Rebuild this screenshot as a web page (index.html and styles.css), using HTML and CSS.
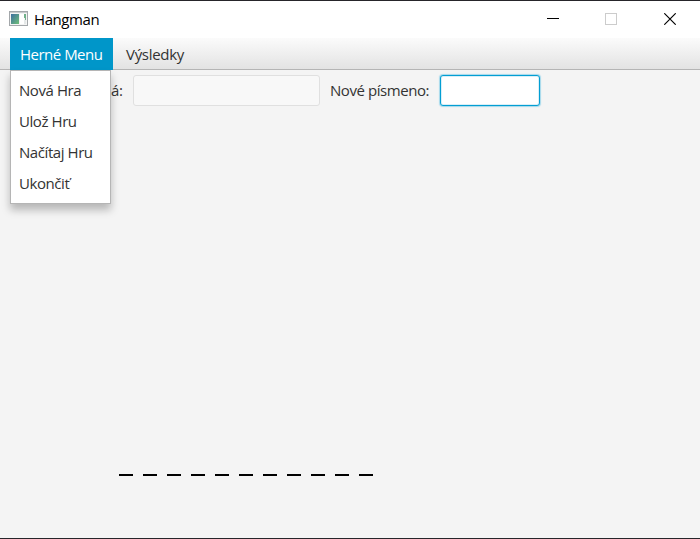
FILE: index.html
```html
<!DOCTYPE html>
<html lang="sk">
<head>
<meta charset="utf-8">
<title>Hangman</title>
<link rel="stylesheet" href="styles.css">
</head>
<body>
<div class="window">
  <header class="titlebar">
    <svg class="app-icon" width="19" height="16" viewBox="0 0 19 16">
      <defs>
        <linearGradient id="pane" x1="0" y1="0" x2="1" y2="1">
          <stop offset="0" stop-color="#3d6fa0"/>
          <stop offset="1" stop-color="#6fbf78"/>
        </linearGradient>
      </defs>
      <rect x="0.5" y="0.5" width="18" height="14" fill="#f4f4f4" stroke="#a3a7aa"/>
      <rect x="1" y="1" width="17" height="1" fill="#c9ccce"/>
      <rect x="2" y="3" width="8" height="10" fill="url(#pane)"/>
      <rect x="11" y="3" width="4" height="10" fill="#fff"/>
      <path d="M15 3H17V9H16V7H15Z" fill="#70b08a"/>
      <rect x="15" y="9" width="2" height="4" fill="#e4e8e8"/>
    </svg>
    <span class="title">Hangman</span>
    <div class="controls">
      <svg width="12" height="12" shape-rendering="crispEdges"><path d="M0 5.5H12" stroke="#000"/></svg>
      <svg width="12" height="12"><rect x=".5" y=".5" width="11" height="11" fill="none" stroke="#ccc"/></svg>
      <svg class="close" width="12" height="12"><path d="M.3.3 11.7 11.7M11.7.3.3 11.7" stroke="#000" stroke-width="1.15"/></svg>
    </div>
  </header>
  <nav class="menubar">
    <div class="menu menu-open">
      <span class="menu-label">Herné Menu</span>
      <ul class="dropdown">
        <li>Nová Hra</li>
        <li>Ulož Hru</li>
        <li>Načítaj Hru</li>
        <li>Ukončiť</li>
      </ul>
    </div>
    <div class="menu">Výsledky</div>
  </nav>
  <main class="content">
    <div class="row">
      <label class="used">á:</label>
      <div class="field disabled"></div>
      <label class="letter">Nové písmeno:</label>
      <div class="field focused"></div>
    </div>
    <div class="word"><i></i><i></i><i></i><i></i><i></i><i></i><i></i><i></i><i></i><i></i><i></i></div>
  </main>
</div>
</body>
</html>
```

FILE: styles.css
```css
* { box-sizing: border-box; }
body {
  margin: 0;
  font: 15px/20px "Open Sans", "Noto Sans", sans-serif;
  letter-spacing: -0.3px;
  color: #333;
}
.window {
  width: 700px;
  height: 539px;
  display: flex;
  flex-direction: column;
  background: #f4f4f4;
  border-top: 1px solid #26252a;
  border-bottom: 1px solid #26252a;
  overflow: hidden;
}
.titlebar {
  height: 37px;
  flex: none;
  display: flex;
  align-items: center;
  padding: 0 24px 1px 9px;
  background: #fff;
}
.app-icon { margin-right: 6px; }
.title { color: #000; letter-spacing: -0.42px; }
.controls { display: flex; gap: 46px; margin-left: auto; }
.controls svg { display: block; }
.close { margin-left: 1px; }
.menubar {
  height: 32px;
  flex: none;
  display: flex;
  padding-left: 10px;
  background: linear-gradient(#fbfbfb, #e3e3e3);
  border-bottom: 1px solid #b5b5b5;
}
.menu { height: 32px; padding: 6px 0 0 13px; white-space: nowrap; }
.menu-open {
  position: relative;
  width: 103px;
  padding-left: 10px;
  background: #0096c9;
  color: #fff;
}
.menu-label { letter-spacing: -0.5px; }
.dropdown {
  position: absolute;
  left: 0;
  top: 32px;
  width: 101px;
  height: 134px;
  margin: 0;
  padding: 4px 0 0 8px;
  list-style: none;
  background: #fff;
  color: #333;
  letter-spacing: -0.43px;
  border: 1px solid #b5b5b5;
  box-shadow: 0 6px 8px rgba(0, 0, 0, 0.25);
  z-index: 1;
}
.dropdown li { height: 31px; padding-top: 5px; }
.content { flex: 1; }
.row { display: flex; padding: 5px 0 0 111px; line-height: 31px; }
.used { width: 22px; }
.field { height: 31px; border-radius: 3px; }
.disabled { width: 187px; background: #f8f8f8; border: 1px solid #e0e0e0; }
.letter { width: 120px; padding-left: 10px; white-space: nowrap; letter-spacing: -0.43px; }
.focused {
  width: 100px;
  background: #fff;
  border: 1px solid #039ed3;
  box-shadow: 0 0 1px 1px #a5d9eb, inset 0 0 0 1px #d9eff7;
}
.word { display: flex; gap: 10px; padding: 368px 0 0 119px; }
.word i { width: 14px; height: 2px; background: #000; }
```
